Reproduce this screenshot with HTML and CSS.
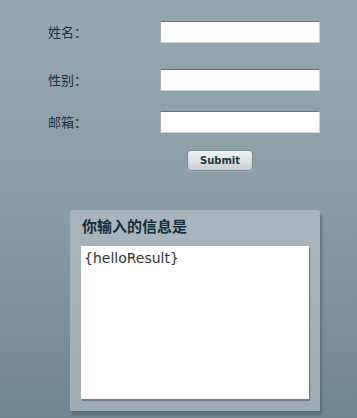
FILE: index.html
```html
<!DOCTYPE html>
<html>
<head>
<meta charset="utf-8">
<link rel="stylesheet" href="styles.css">
</head>
<body>
<div class="page">
  <form class="form">
    <div class="row row-1"><label class="label">姓名：</label><input class="field" type="text"></div>
    <div class="row row-2"><label class="label">性别：</label><input class="field" type="text"></div>
    <div class="row row-3"><label class="label">邮箱：</label><input class="field" type="text"></div>
    <div class="actions"><button class="submit" type="button">Submit</button></div>
  </form>
  <div class="panel">
    <div class="panel-title">你输入的信息是</div>
    <div class="panel-body">{helloResult}</div>
  </div>
</div>
</body>
</html>
```
FILE: styles.css
```css
html, body {
  margin: 0;
  padding: 0;
  height: 100%;
}
body {
  background: linear-gradient(to bottom, #95a8b2 0%, #8a9ea8 45%, #6f8793 100%);
  font-family: "Noto Sans CJK SC", sans-serif;
  overflow: hidden;
}
.page {
  display: flex;
  flex-direction: column;
}
.form {
  display: flex;
  flex-direction: column;
  margin: 0;
}
.row {
  display: flex;
  align-items: center;
  height: 22px;
}
.row-1 { margin-top: 21px; }
.row-2 { margin-top: 26px; }
.row-3 { margin-top: 20px; }
.label {
  flex: 0 0 160px;
  padding-left: 48px;
  box-sizing: border-box;
  font-size: 13px;
  color: #1b3540;
  line-height: 22px;
}
.field {
  flex: 0 0 160px;
  width: 160px;
  height: 22px;
  box-sizing: border-box;
  margin: 0;
  padding: 0 3px;
  background: #fff;
  border: 1px solid #c9d2d6;
  border-top-color: #6a7074;
  border-left-color: #a9b0b4;
  border-radius: 0;
  outline: none;
}
.actions {
  display: flex;
  padding-left: 187px;
  margin-top: 17px;
}
.submit {
  width: 66px;
  height: 21px;
  margin: 0;
  padding: 0;
  border: 1px solid #7e8a91;
  border-radius: 4px;
  background: linear-gradient(to bottom, #f1f3f4 0%, #dde2e5 50%, #c3ccd1 100%);
  font-family: Verdana, "DejaVu Sans", sans-serif;
  font-weight: bold;
  font-size: 10px;
  color: #1d3540;
  box-shadow: 0 1px 0 rgba(255,255,255,0.25);
}
.panel {
  margin-top: 39px;
  margin-left: 70px;
  width: 250px;
  height: 201px;
  box-sizing: border-box;
  padding: 6px 11px 0 11px;
  background: linear-gradient(to bottom, #a8b5bc 0%, #9eacb3 100%);
  border-radius: 3px 3px 0 0;
  box-shadow: 2px 4px 2px rgba(60, 80, 90, 0.45);
}
.panel-title {
  font-size: 15px;
  font-weight: bold;
  color: #14303a;
  line-height: 20px;
  padding-left: 1px;
  height: 30px;
}
.panel-body {
  height: 153px;
  background: #fff;
  box-shadow: 1px 2px 1px rgba(80, 95, 105, 0.6);
  font-family: "DejaVu Sans", sans-serif;
  font-size: 14px;
  color: #333;
  padding: 2px 3px;
  box-sizing: border-box;
  line-height: 20px;
}
```
